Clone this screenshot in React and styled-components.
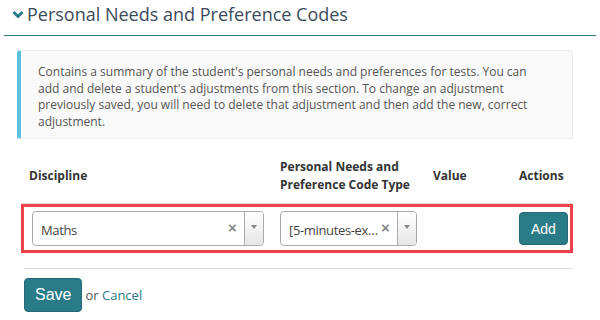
import styled, { createGlobalStyle } from "styled-components";

const GlobalStyle = createGlobalStyle`
  body {
    margin: 0;
    background: #fff;
    font-family: "Open Sans", "Liberation Sans", sans-serif;
  }
`;

const teal = "#2a7b88";

const Page = styled.div`
  width: 600px;
  height: 320px;
  padding: 0 4px;
  box-sizing: border-box;
  overflow: hidden;
`;

const SectionHeader = styled.div`
  display: flex;
  align-items: center;
  gap: 3px;
  height: 36px;
  padding: 0 0 0 8px;
  border-bottom: 1px solid ${teal};
  box-sizing: border-box;
  .chevron {
    margin-top: -6px;
  }
`;

const Title = styled.h2`
  margin: 0 0 7px;
  font-size: 18px;
  font-weight: 400;
  color: #3c4b5c;
`;

const Body = styled.div`
  margin: 14px 23px 0 13px;
`;

const InfoBox = styled.div`
  background: #f9f9f9;
  border: 1px solid #eee;
  border-left: 4px solid #5bc0de;
  border-radius: 3px;
  padding: 13px 16px 8px 17px;
  font-size: 12px;
  line-height: 16.5px;
  color: #555;
`;

const cols = "251px 153px 86px 1fr";

const HeadRow = styled.div`
  display: grid;
  grid-template-columns: ${cols};
  align-items: center;
  margin: 11px 0 0 4px;
  border-bottom: 1px solid #ddd;
`;

const HeadCell = styled.div`
  padding: 8px 8px 9px;
  font-size: 12px;
  font-weight: 700;
  line-height: 18px;
  color: #333;
`;

const EditRow = styled.div`
  display: grid;
  grid-template-columns: 248px 153px 86px 1fr;
  align-items: center;
  margin-left: 4px;
  border: 3px solid #f0424a;
`;

const Cell = styled.div`
  padding: 4px 8px 4px;
  display: flex;
  justify-content: ${(p) => (p.$end ? "flex-start" : "stretch")};
`;

const SelectBox = styled.div`
  flex: 1;
  display: flex;
  align-items: stretch;
  height: 35px;
  border: 1px solid #aaa;
  border-radius: 4px;
  background: #fff;
  box-sizing: border-box;
  overflow: hidden;
`;

const SelectValue = styled.span`
  flex: 1;
  min-width: 0;
  padding-left: 8px;
  align-self: center;
  font-size: 13px;
  letter-spacing: -0.35px;
  color: #444;
  white-space: nowrap;
  overflow: hidden;
  text-overflow: ellipsis;
  margin-top: 2px;
`;

const Clear = styled.span`
  width: 8px;
  margin: -3px 8px 0 1px;
  align-self: center;
  text-align: center;
  font-family: "Liberation Sans", Arial, sans-serif;
  font-size: 15px;
  font-weight: 700;
  color: #888;
`;

const Arrow = styled.span`
  width: 19px;
  border-left: 1px solid #aaa;
  background: linear-gradient(#fff, #e6e6e6);
  display: flex;
  justify-content: center;
  padding-top: 13px;
  box-sizing: border-box;
  &::after {
    content: "";
    width: 0;
    height: 0;
    border-left: 3px solid transparent;
    border-right: 3px solid transparent;
    border-top: 4px solid #888;
  }
`;

const Button = styled.button`
  background: ${teal};
  color: #fff;
  border: 1px solid #236a76;
  border-radius: 4px;
  font-family: "Liberation Sans", Arial, sans-serif;
  font-size: ${(p) => (p.$big ? 16 : 14)}px;
  height: ${(p) => (p.$big ? 34 : 33)}px;
  padding: 0 ${(p) => (p.$big ? 10 : 11)}px;
  cursor: pointer;
`;

const Divider = styled.div`
  height: 1px;
  background: #ddd;
  margin: 15px 0 0 7px;
`;

const Footer = styled.div`
  display: flex;
  align-items: center;
  gap: 3px;
  margin: 9px 0 0 7px;
  font-size: 13px;
  color: #555;
  a {
    color: ${teal};
    text-decoration: none;
  }
`;

const ChevronDown = () => (
  <svg className="chevron" width="12" height="9" viewBox="0 0 12 9">
    <polyline
      points="1.5,2 6,6.5 10.5,2"
      fill="none"
      stroke={teal}
      strokeWidth="3"
    />
  </svg>
);

const Select = ({ value }) => (
  <SelectBox>
    <SelectValue>{value}</SelectValue>
    <Clear>×</Clear>
    <Arrow />
  </SelectBox>
);

export default function App() {
  return (
    <Page>
      <GlobalStyle />
      <SectionHeader>
        <ChevronDown />
        <Title>Personal Needs and Preference Codes</Title>
      </SectionHeader>
      <Body>
        <InfoBox>
          Contains a summary of the student's personal needs and preferences for tests. You can
          <br />
          add and delete a student's adjustments from this section. To change an adjustment
          <br />
          previously saved, you will need to delete that adjustment and then add the new, correct
          <br />
          adjustment.
        </InfoBox>
        <HeadRow>
          <HeadCell>Discipline</HeadCell>
          <HeadCell>
            Personal Needs and
            <br />
            Preference Code Type
          </HeadCell>
          <HeadCell>Value</HeadCell>
          <HeadCell>Actions</HeadCell>
        </HeadRow>
        <EditRow>
          <Cell>
            <Select value="Maths" />
          </Cell>
          <Cell>
            <Select value="[5-minutes-extra-time]" />
          </Cell>
          <Cell />
          <Cell $end>
            <Button>Add</Button>
          </Cell>
        </EditRow>
        <Divider />
        <Footer>
          <Button $big>Save</Button>
          <span>
            or <a href="#">Cancel</a>
          </span>
        </Footer>
      </Body>
    </Page>
  );
}
